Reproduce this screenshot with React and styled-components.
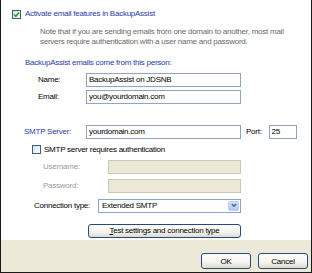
import React from "react";
import styled, { createGlobalStyle } from "styled-components";

const GlobalStyle = createGlobalStyle`
  html, body {
    margin: 0;
    padding: 0;
    background: #fff;
  }
  body {
    font-family: "Liberation Sans", Arial, sans-serif;
    font-size: 8px;
    letter-spacing: -0.25px;
    color: #000;
  }
`;

const Dialog = styled.div`
  box-sizing: border-box;
  width: 312px;
  height: 273px;
  display: flex;
  flex-direction: column;
  border: 1px solid #1a1a1a;
  border-top: none;
  background: #fff;
`;

const Body = styled.div`
  flex: 1;
  display: flex;
  flex-direction: column;
`;

const Row = styled.div`
  display: flex;
  align-items: center;
  white-space: nowrap;
  height: ${(p) => p.$h || 14}px;
  margin-top: ${(p) => p.$top || 0}px;
  padding-left: ${(p) => p.$indent || 0}px;
`;

const Check = styled.span`
  box-sizing: border-box;
  width: 9px;
  height: 9px;
  margin-right: ${(p) => p.$gap}px;
  border: 1px solid #3a5f8a;
  background: linear-gradient(135deg, #dcdcd6, #ffffff);
  display: flex;
  align-items: center;
  justify-content: center;
`;

const BlueText = styled.span`
  color: #2b3aa8;
  line-height: 10px;
`;

const Note = styled.div`
  margin-top: 7.5px;
  padding-left: 39px;
  color: #6a6a6a;
  line-height: 10px;
  white-space: nowrap;
`;

const Heading = styled.div`
  margin-top: 11px;
  padding-left: 24px;
  color: #2b3aa8;
  line-height: 10px;
  height: 10px;
`;

const Label = styled.span`
  width: ${(p) => p.$w}px;
  flex-shrink: 0;
  color: ${(p) => (p.$disabled ? "#9a9a9a" : p.$blue ? "#2b3aa8" : "#000")};
`;

const Field = styled.div`
  box-sizing: border-box;
  width: ${(p) => p.$w}px;
  height: 14px;
  border: 1px solid ${(p) => (p.$disabled ? "#cbc8b8" : "#8ea6c4")};
  background: ${(p) => (p.$disabled ? "#ebe8d6" : "#fff")};
  padding-left: 2px;
  display: flex;
  align-items: center;
  white-space: nowrap;
`;

const PortLabel = styled.span`
  margin-left: 5px;
  width: 22.5px;
`;

const Select = styled(Field)`
  padding-left: 3px;
  justify-content: space-between;
  padding-right: 1px;
`;

const DropBtn = styled.span`
  box-sizing: border-box;
  width: 11px;
  height: 10px;
  border-radius: 2px;
  border: 1px solid #bccdf5;
  background: linear-gradient(#d2defc, #b3c8f7);
  display: flex;
  align-items: center;
  justify-content: center;
`;

const Button = styled.div`
  box-sizing: border-box;
  width: ${(p) => p.$w}px;
  height: ${(p) => p.$h || 14}px;
  border: 1px solid #274a7c;
  border-radius: 3px;
  background: linear-gradient(#ffffff 0%, #f4f3ee 60%, #dcd9cc 100%);
  display: flex;
  align-items: center;
  justify-content: center;
  color: #000;
`;

const Footer = styled.div`
  height: 32px;
  background: #ece9d9;
  display: flex;
  justify-content: flex-end;
  align-items: flex-end;
  gap: 7px;
  padding: 0 3px 3px 0;
  box-sizing: border-box;
`;

function Tick() {
  return (
    <svg width="7" height="7" viewBox="0 0 7 7">
      <path d="M1 3.5 L2.8 5.3 L6 1.6" fill="none" stroke="#21a121" strokeWidth="1.6" />
    </svg>
  );
}

function Chevron() {
  return (
    <svg width="6" height="5" viewBox="0 0 6 5">
      <path d="M0.8 1 L3 3.3 L5.2 1" fill="none" stroke="#4d6185" strokeWidth="1.4" />
    </svg>
  );
}

export default function App() {
  return (
    <>
      <GlobalStyle />
      <Dialog>
        <Body>
          <Row $top={9} $h={10} $indent={11}>
            <Check $gap={4}>
              <Tick />
            </Check>
            <BlueText>Activate email features in BackupAssist</BlueText>
          </Row>
          <Note>
            Note that if you are sending emails from one domain to another, most mail
            <br />
            servers require authentication with a user name and password.
          </Note>
          <Heading>BackupAssist emails come from this person:</Heading>
          <Row $top={5} $indent={37}>
            <Label $w={48}>Name:</Label>
            <Field $w={155}>BackupAssist on JDSNB</Field>
          </Row>
          <Row $top={3} $indent={37}>
            <Label $w={48}>Email:</Label>
            <Field $w={155}>you@yourdomain.com</Field>
          </Row>
          <Row $top={21} $indent={23}>
            <Label $w={62} $blue>
              SMTP Server:
            </Label>
            <Field $w={155}>yourdomain.com</Field>
            <PortLabel>Port:</PortLabel>
            <Field $w={28}>25</Field>
          </Row>
          <Row $top={5.5} $h={10} $indent={31}>
            <Check $gap={3} />
            <span>SMTP server requires authentication</span>
          </Row>
          <Row $top={5.5} $indent={42}>
            <Label $w={65} $disabled>
              Username:
            </Label>
            <Field $w={133} $disabled />
          </Row>
          <Row $top={5} $indent={42}>
            <Label $w={65} $disabled>
              Password:
            </Label>
            <Field $w={133} $disabled />
          </Row>
          <Row $top={6} $indent={33}>
            <Label $w={64}>Connection type:</Label>
            <Select $w={143}>
              Extended SMTP
              <DropBtn>
                <Chevron />
              </DropBtn>
            </Select>
          </Row>
          <Row $top={11} $indent={87}>
            <Button $w={153}>
              <span>
                <u>T</u>est settings and connection type
              </span>
            </Button>
          </Row>
        </Body>
        <Footer>
          <Button $w={50} $h={16}>
            OK
          </Button>
          <Button $w={50} $h={16}>
            Cancel
          </Button>
        </Footer>
      </Dialog>
    </>
  );
}
